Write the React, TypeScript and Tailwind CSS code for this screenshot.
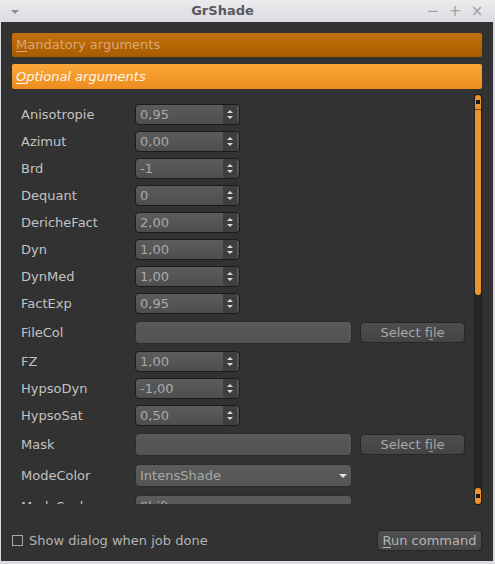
import React from "react";

const font = { fontFamily: '"DejaVu Sans", "Liberation Sans", sans-serif' };

function SpinBox({ value }: { value: string }) {
  return (
    <div className="flex h-[21px] w-[105px] items-stretch rounded-[4px] border border-[#1b1b1b] bg-gradient-to-b from-[#5c5c5c] to-[#4e4e4e] overflow-hidden">
      <div className="flex flex-1 items-center pl-[4px] text-[13px] text-[#a9a9a9] leading-none">{value}</div>
      <div className="flex w-[14px] mr-[2px] flex-col items-center justify-center gap-[3px] bg-[#3e3e3e]">
        <div className="h-0 w-0 border-x-[3.5px] border-b-[3.5px] border-x-transparent border-b-[#d8d8d8]" />
        <div className="h-0 w-0 border-x-[3.5px] border-t-[3.5px] border-x-transparent border-t-[#d8d8d8]" />
      </div>
    </div>
  );
}

function Label({ children }: { children: React.ReactNode }) {
  return <div className="w-[114px] shrink-0 text-[13px] text-[#c2c2c2]">{children}</div>;
}

function SpinRow({ label, value }: { label: string; value: string }) {
  return (
    <div className="flex h-[27px] items-center pl-[9px]">
      <Label>{label}</Label>
      <SpinBox value={value} />
    </div>
  );
}

function FileRow({ label }: { label: string }) {
  return (
    <div className="flex h-[31px] items-center pl-[9px]">
      <Label>{label}</Label>
      <div className="h-[23px] w-[217px] rounded-[4px] border border-[#2c2c2c] bg-gradient-to-b from-[#595959] to-[#525252]" />
      <div className="ml-[8px] flex h-[21px] w-[105px] items-center justify-center rounded-[4px] border border-[#262626] bg-gradient-to-b from-[#4d4d4d] to-[#444444] text-[13px] text-[#a8a8a8]">
        Select f<span className="underline underline-offset-2">i</span>le
      </div>
    </div>
  );
}

function ComboRow({ label, value }: { label: string; value: string }) {
  return (
    <div className="flex h-[31px] items-center pl-[9px]">
      <Label>{label}</Label>
      <div className="flex h-[23px] w-[217px] items-center justify-between rounded-[4px] border border-[#2c2c2c] bg-gradient-to-b from-[#5c5c5c] to-[#535353] pl-[4px] pr-[4px] text-[13px] text-[#a8a8a8]">
        <span>{value}</span>
        <div className="h-0 w-0 border-x-[4px] border-t-[4px] border-x-transparent border-t-[#e0e0e0]" />
      </div>
    </div>
  );
}

export default function App() {
  return (
    <div style={font} className="flex h-[564px] w-[495px] flex-col bg-[#dcdce0]">
      {/* Title bar */}
      <div className="relative flex h-[22px] shrink-0 items-center bg-gradient-to-b from-[#ececef] to-[#dcdce0]">
        <div className="absolute left-[11px] top-[10px] h-0 w-0 border-x-[4px] border-t-[4px] border-x-transparent border-t-[#8e8e94]" />
        <div className="flex-1 pr-[50px] text-center text-[13px] font-bold text-[#58585e]">GrShade</div>
        <div className="absolute right-0 top-0 flex h-[22px] items-center text-[#a0a0a6]">
          <span className="w-[22px] text-center text-[15px] leading-none">−</span>
          <span className="w-[22px] text-center text-[15px] leading-none">+</span>
          <span className="mr-[7px] w-[22px] text-center text-[15px] leading-none">×</span>
        </div>
      </div>

      {/* Body */}
      <div className="mb-[3px] ml-[1px] mr-[2px] flex flex-1 flex-col bg-[#323232] px-[11px]">
        <div className="mt-[11px] flex h-[24px] items-center rounded-[2px] bg-gradient-to-b from-[#c3700a] to-[#a85b02] pl-[4px] text-[13px] text-[#d9a874]">
          <span><span className="underline underline-offset-2">M</span>andatory arguments</span>
        </div>
        <div className="mt-[7px] flex h-[25px] items-center rounded-[2px] bg-gradient-to-b from-[#f9a738] to-[#ee8c1e] pl-[4px] text-[13px] italic text-[#fff6ea]">
          <span><span className="underline underline-offset-2">O</span>ptional arguments</span>
        </div>

        {/* Scroll region */}
        <div className="mt-[6px] flex h-[409px]">
          <div className="flex-1 overflow-hidden pt-[6px]">
            <SpinRow label="Anisotropie" value="0,95" />
            <SpinRow label="Azimut" value="0,00" />
            <SpinRow label="Brd" value="-1" />
            <SpinRow label="Dequant" value="0" />
            <SpinRow label="DericheFact" value="2,00" />
            <SpinRow label="Dyn" value="1,00" />
            <SpinRow label="DynMed" value="1,00" />
            <SpinRow label="FactExp" value="0,95" />
            <FileRow label="FileCol" />
            <SpinRow label="FZ" value="1,00" />
            <SpinRow label="HypsoDyn" value="-1,00" />
            <SpinRow label="HypsoSat" value="0,50" />
            <FileRow label="Mask" />
            <ComboRow label="ModeColor" value="IntensShade" />
            <ComboRow label="ModeScale" value="Shift" />
          </div>
          {/* Scrollbar */}
          <div className="ml-[1px] flex w-[6px] flex-col rounded-[2px] bg-[#272727] shadow-[0_0_0_1px_#1e1e1e]">
            <div className="flex h-[15px] items-center justify-center rounded-t-[3px] border-b border-[#7a4a10] bg-[#f0922b]">
              <div className="h-[2px] w-[2px] bg-[#1a1a1a] shadow-[0_0_0_1px_#1a1a1a]" />
            </div>
            <div className="h-[185px] rounded-b-[3px] bg-[#f0922b]" />
            <div className="flex-1" />
            <div className="flex h-[16px] items-center justify-center rounded-[3px] bg-[#f0922b]">
              <div className="h-[2px] w-[2px] bg-[#1a1a1a] shadow-[0_0_0_1px_#1a1a1a]" />
            </div>
          </div>
          <div className="w-[1px]" />
        </div>

        {/* Bottom row */}
        <div className="mt-[26px] flex h-[21px] items-center justify-between">
          <div className="flex items-center">
            <div className="h-[11px] w-[11px] border border-[#a8a8a8]" />
            <span className="ml-[6px] text-[13px] text-[#b4b4b4]">Show dialog when job done</span>
          </div>
          <div className="flex h-[21px] w-[105px] items-center justify-center rounded-[4px] border border-[#262626] bg-gradient-to-b from-[#4f4f4f] to-[#464646] text-[13px] text-[#b4b4b4]">
            <span><span className="underline underline-offset-2">R</span>un command</span>
          </div>
        </div>
      </div>
    </div>
  );
}
